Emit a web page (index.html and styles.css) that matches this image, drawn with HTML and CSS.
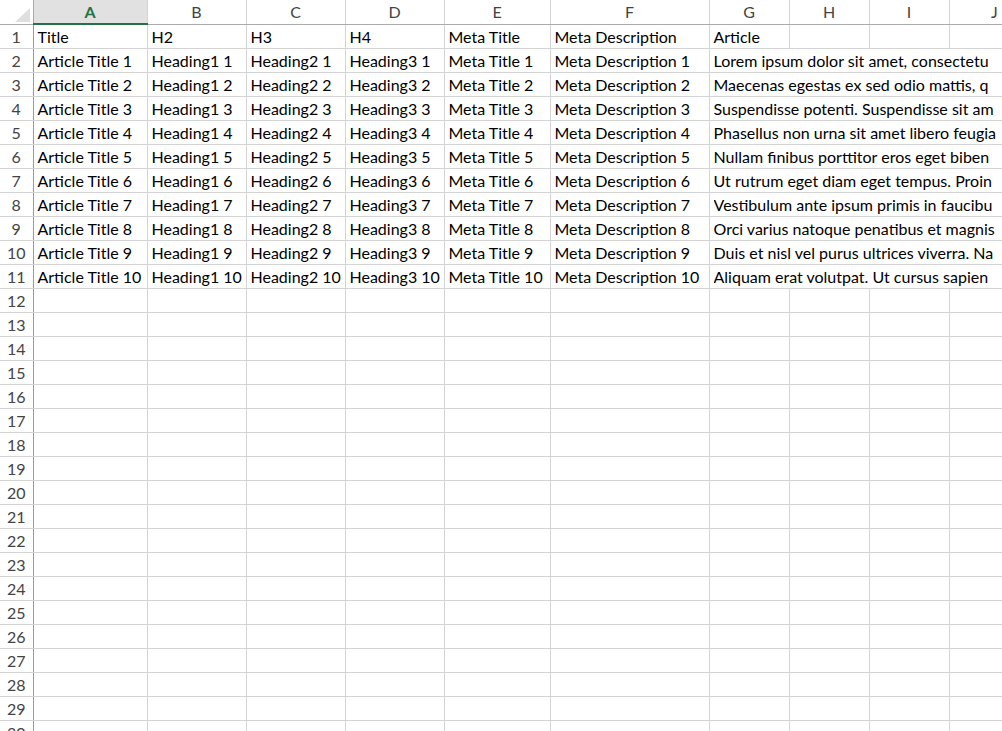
FILE: index.html
```html
<!DOCTYPE html>
<html lang="en">
<head>
    <meta charset="UTF-8">
    <title>Articles - Sheet1</title>
    <link rel="stylesheet" href="styles.css">
</head>
<body>
    <table class="sheet">
        <colgroup>
            <col class="w-rh">
            <col class="w-a">
            <col class="w-b">
            <col class="w-c">
            <col class="w-d">
            <col class="w-e">
            <col class="w-f">
            <col class="w-g">
            <col class="w-g">
            <col class="w-g">
            <col class="w-j">
        </colgroup>
        <thead>
            <tr>
                <th class="corner"><span class="tri"></span></th>
                <th class="col-head active">A</th>
                <th class="col-head">B</th>
                <th class="col-head">C</th>
                <th class="col-head">D</th>
                <th class="col-head">E</th>
                <th class="col-head">F</th>
                <th class="col-head">G</th>
                <th class="col-head">H</th>
                <th class="col-head">I</th>
                <th class="col-head">J</th>
            </tr>
        </thead>
        <tbody id="rows">
            <tr>
                <th class="row-head">1</th>
                <td>Title</td><td>H2</td><td>H3</td><td>H4</td><td>Meta Title</td><td>Meta Description</td><td>Article</td><td></td><td></td><td></td>
            </tr>
            <tr><th class="row-head">2</th><td>Article Title 1</td><td>Heading1 1</td><td>Heading2 1</td><td>Heading3 1</td><td>Meta Title 1</td><td>Meta Description 1</td><td class="long" colspan="4"><div>Lorem ipsum dolor sit amet, consectetu</div></td></tr>
            <tr><th class="row-head">3</th><td>Article Title 2</td><td>Heading1 2</td><td>Heading2 2</td><td>Heading3 2</td><td>Meta Title 2</td><td>Meta Description 2</td><td class="long" colspan="4"><div>Maecenas egestas ex sed odio mattis, q</div></td></tr>
            <tr><th class="row-head">4</th><td>Article Title 3</td><td>Heading1 3</td><td>Heading2 3</td><td>Heading3 3</td><td>Meta Title 3</td><td>Meta Description 3</td><td class="long" colspan="4"><div>Suspendisse potenti. Suspendisse sit am</div></td></tr>
            <tr><th class="row-head">5</th><td>Article Title 4</td><td>Heading1 4</td><td>Heading2 4</td><td>Heading3 4</td><td>Meta Title 4</td><td>Meta Description 4</td><td class="long" colspan="4"><div>Phasellus non urna sit amet libero feugia</div></td></tr>
            <tr><th class="row-head">6</th><td>Article Title 5</td><td>Heading1 5</td><td>Heading2 5</td><td>Heading3 5</td><td>Meta Title 5</td><td>Meta Description 5</td><td class="long" colspan="4"><div>Nullam finibus porttitor eros eget biben</div></td></tr>
            <tr><th class="row-head">7</th><td>Article Title 6</td><td>Heading1 6</td><td>Heading2 6</td><td>Heading3 6</td><td>Meta Title 6</td><td>Meta Description 6</td><td class="long" colspan="4"><div>Ut rutrum eget diam eget tempus. Proin</div></td></tr>
            <tr><th class="row-head">8</th><td>Article Title 7</td><td>Heading1 7</td><td>Heading2 7</td><td>Heading3 7</td><td>Meta Title 7</td><td>Meta Description 7</td><td class="long" colspan="4"><div>Vestibulum ante ipsum primis in faucibu</div></td></tr>
            <tr><th class="row-head">9</th><td>Article Title 8</td><td>Heading1 8</td><td>Heading2 8</td><td>Heading3 8</td><td>Meta Title 8</td><td>Meta Description 8</td><td class="long" colspan="4"><div>Orci varius natoque penatibus et magnis</div></td></tr>
            <tr><th class="row-head">10</th><td>Article Title 9</td><td>Heading1 9</td><td>Heading2 9</td><td>Heading3 9</td><td>Meta Title 9</td><td>Meta Description 9</td><td class="long" colspan="4"><div>Duis et nisl vel purus ultrices viverra. Na</div></td></tr>
            <tr><th class="row-head">11</th><td>Article Title 10</td><td>Heading1 10</td><td>Heading2 10</td><td>Heading3 10</td><td>Meta Title 10</td><td>Meta Description 10</td><td class="long" colspan="4"><div>Aliquam erat volutpat. Ut cursus sapien</div></td></tr>
        </tbody>
    </table>

    <script>
        // linhas vazias 12..30
        const rows = document.getElementById('rows');
        for (let i = 12; i <= 30; i++) {
            const tr = document.createElement('tr');
            let html = '<th class="row-head">' + i + '</th>';
            for (let c = 0; c < 10; c++) {
                html += '<td></td>';
            }
            tr.innerHTML = html;
            rows.appendChild(tr);
        }
    </script>
</body>
</html>
```

FILE: styles.css
```css
html, body {
    margin: 0;
    padding: 0;
    background: #fff;
    overflow: hidden;
    height: 731px;
}
.sheet {
    border-collapse: collapse;
    table-layout: fixed;
    width: 1040px;
    font-family: Lato, "Open Sans", sans-serif;
    font-size: 16px;
    color: #000;
}
.w-rh { width: 33px; }
.w-a { width: 114px; }
.w-b { width: 99px; }
.w-c { width: 99px; }
.w-d { width: 99px; }
.w-e { width: 106px; }
.w-f { width: 159px; }
.w-g { width: 80px; }
.w-j { width: 91px; }

.sheet th, .sheet td {
    height: 23px;
    padding: 0;
    border: 1px solid #d4d4d4;
    line-height: 23px;
}
.sheet td {
    padding: 0 3px 0 4px;
    white-space: nowrap;
    overflow: hidden;
    vertical-align: middle;
}
.corner {
    position: relative;
    border-top: none !important;
    border-left: none !important;
    border-right: 1px solid #ababab !important;
    border-bottom: 1px solid #ababab !important;
}
.tri {
    position: absolute;
    right: 3px;
    bottom: 2px;
    width: 0;
    height: 0;
    border-left: 15px solid transparent;
    border-bottom: 14px solid #dfdfdf;
}
.col-head {
    font-weight: normal;
    color: #444;
    font-size: 16px;
    border-top: none !important;
    border-bottom: 1px solid #ababab !important;
    background: #fff;
}
.col-head.active {
    background: #e1e1e1;
    color: #217346;
    font-weight: bold;
    border-bottom: 2px solid #217346 !important;
}
.row-head {
    font-weight: normal;
    color: #444;
    font-size: 16px;
    text-align: center;
    border-left: none !important;
    border-right: 1px solid #9b9b9b !important;
}
.long div {
    overflow: hidden;
    white-space: nowrap;
}
```
